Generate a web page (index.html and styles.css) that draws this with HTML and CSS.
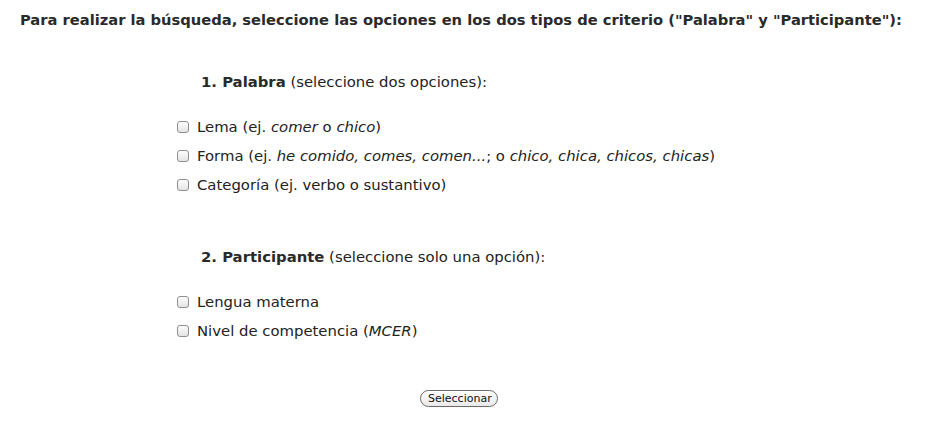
FILE: index.html
```html
<!DOCTYPE html>
<html lang="es">
<head>
<meta charset="utf-8">
<link rel="stylesheet" href="styles.css">
</head>
<body>
<div class="page">
  <p class="intro">Para realizar la búsqueda, seleccione las opciones en los dos tipos de criterio ("Palabra" y "Participante"):</p>
  <div class="form">
    <p class="section-title"><b>1. Palabra</b> (seleccione dos opciones):</p>
    <ul class="options">
      <li><span class="box"></span><span class="label">Lema (ej. <i>comer</i> o <i>chico</i>)</span></li>
      <li><span class="box"></span><span class="label">Forma (ej. <i>he comido, comes, comen...</i>; o <i>chico, chica, chicos, chicas</i>)</span></li>
      <li><span class="box"></span><span class="label">Categoría (ej. verbo o sustantivo)</span></li>
    </ul>
    <p class="section-title second"><b>2. Participante</b> (seleccione solo una opción):</p>
    <ul class="options">
      <li><span class="box"></span><span class="label">Lengua materna</span></li>
      <li><span class="box"></span><span class="label">Nivel de competencia (<i>MCER</i>)</span></li>
    </ul>
  </div>
  <div class="actions"><span class="button">Seleccionar</span></div>
</div>
</body>
</html>
```
FILE: styles.css
```css
html, body { margin: 0; padding: 0; background: #fff; }
body {
  font-family: "DejaVu Sans", Verdana, sans-serif;
  font-size: 14.85px;
  color: #222;
}
.page { padding: 11px 0 0 20px; width: 926px; }
.intro { margin: 0; font-weight: bold; font-size: 14.7px; line-height: 18px; color: #2a2a2a; }
.form { padding-left: 157px; }
.section-title { margin: 44px 0 0 24px; line-height: 18px; }
.section-title b { color: #2a2a2a; }
.section-title.second { margin-top: 48.5px; }
.options { list-style: none; margin: 21.5px 0 0 0; padding: 0; }
.options li { display: flex; align-items: center; height: 29px; line-height: 18px; }
.box {
  width: 10px; height: 10px; margin-right: 8px;
  border: 1px solid #8f8f8f; border-radius: 3px;
  background: linear-gradient(#fdfdfd, #e4e4e4);
  flex: none;
}
.actions { display: flex; justify-content: center; margin-top: 44px; padding-right: 48px; }
.button {
  font-size: 11px; line-height: 15px; padding: 0 7px;
  border: 1px solid #6a6a6a; border-radius: 9px;
  background: linear-gradient(#ffffff, #e9e9e9);
  color: #111; width: 62px; text-align: center;
}
```
